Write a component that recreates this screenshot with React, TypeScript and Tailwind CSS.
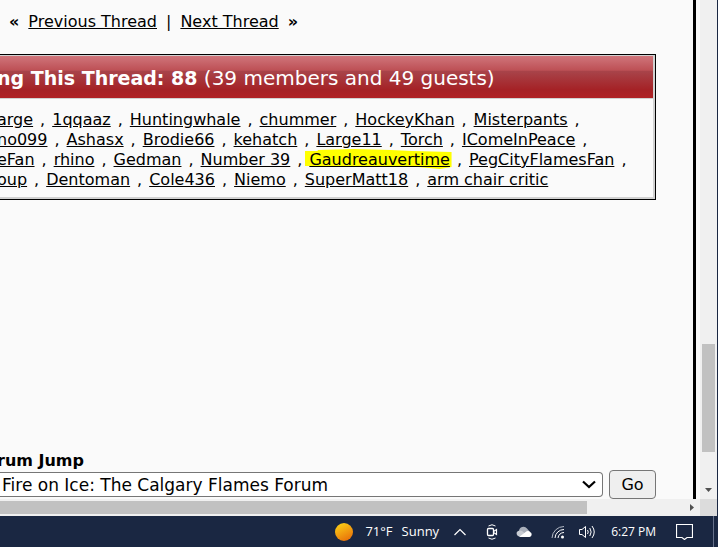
import { Fragment } from "react";

const MEMBER_LINES: string[][] = [
  ["arge", "1qqaaz", "Huntingwhale", "chummer", "HockeyKhan", "Misterpants", ""],
  ["no099", "Ashasx", "Brodie66", "kehatch", "Large11", "Torch", "IComeInPeace", ""],
  ["eFan", "rhino", "Gedman", "Number 39", "Gaudreauvertime", "PegCityFlamesFan", ""],
  ["oup", "Dentoman", "Cole436", "Niemo", "SuperMatt18", "arm chair critic"],
];

const HIGHLIGHTED = "Gaudreauvertime";

function MemberLink({ name }: { name: string }) {
  if (name !== HIGHLIGHTED) {
    return (
      <a href="#member" className="underline">
        {name}
      </a>
    );
  }
  return (
    <a href="#member" className="relative underline">
      {/* hand-drawn marker stroke */}
      <svg
        aria-hidden
        viewBox="0 0 150 20"
        preserveAspectRatio="none"
        className="absolute -top-px -left-1 -z-10 h-5 w-[calc(100%+6px)]"
      >
        <path d="M0 2H13V1L50 0 88 1 110 2 150 3V18L138 20 116 18 105 17 0 17Z" fill="#ffff00" />
      </svg>
      {name}
    </a>
  );
}

function ThreadNav() {
  return (
    <nav className="flex gap-[9px] pt-3 pl-3 leading-5 whitespace-nowrap">
      <strong>«</strong>
      <a href="#previous" className="underline">Previous Thread</a>
      <span>|</span>
      <a href="#next" className="underline">Next Thread</a>
      <strong>»</strong>
    </nav>
  );
}

function ViewersPanel() {
  return (
    <section className="mt-[22px] border border-l-0 border-black bg-[#fafafa]">
      <div className="border-2 border-t-1 border-l-0 border-[#d1d1d1]">
        <h2 className="flex h-[43px] items-center border-b border-[#d1d1d1] bg-[linear-gradient(#d0757b_0%,#bd5055_34%,#a8444a_36%,#a52226_80%,#b02225_100%)] pt-[2px] text-xl whitespace-pre text-white">
          <strong className="text-[19px]">ng This Thread: 88</strong> (39 members and 49 guests)
        </h2>
        <div className="isolate pt-[11px] pb-[7px] leading-5 whitespace-nowrap">
          {MEMBER_LINES.map((line) => (
            <div key={line[0]}>
              {line.map((name, i) => (
                <Fragment key={name}>
                  {i > 0 && <span className="mx-[7px]">,</span>}
                  {name && <MemberLink name={name} />}
                </Fragment>
              ))}
            </div>
          ))}
        </div>
      </div>
    </section>
  );
}

function ForumJump() {
  return (
    <form className="mt-auto" onSubmit={(e) => e.preventDefault()}>
      <label htmlFor="forum" className="block leading-[18px] font-bold">
        rum Jump
      </label>
      <div className="flex items-center gap-[6px]">
        <div className="relative flex-1">
          <select
            id="forum"
            className="block h-[25px] w-full appearance-none rounded-r border border-l-0 border-[#767676] bg-white pl-[5px] text-[17px] text-black"
          >
            <option>Fire on Ice: The Calgary Flames Forum</option>
          </select>
          <svg
            aria-hidden
            viewBox="0 0 14 9"
            className="pointer-events-none absolute top-2 right-[7px] h-[9px] w-[14px]"
          >
            <path d="M1 1.5 7 7 13 1.5" fill="none" stroke="#000" strokeWidth="2.2" />
          </svg>
        </div>
        <button className="h-[29px] w-[47px] rounded border border-[#767676] bg-[#efefef]">Go</button>
      </div>
    </form>
  );
}

function VerticalScrollbar() {
  return (
    <div className="flex w-[17px] flex-col items-center bg-[#f0f0f0]">
      <div className="flex-[344]" />
      <div className="w-[13px] flex-[108] bg-[#c1c1c1]" />
      <div className="flex-[36]" />
      <svg aria-hidden viewBox="0 0 7 4" className="mb-[7px] h-1 w-[7px]">
        <path d="M0 0H7L3.5 4Z" fill="#505050" />
      </svg>
    </div>
  );
}

function HorizontalScrollbar() {
  return (
    <div className="flex h-[17px]">
      <div className="flex flex-1 items-center bg-[#f0f0f0]">
        <div className="h-[13px] flex-[586] bg-[#c1c1c1]" />
        <div className="flex-[103]" />
        <svg aria-hidden viewBox="0 0 4 7" className="mr-[6px] h-[7px] w-1">
          <path d="M0 0V7L4 3.5Z" fill="#505050" />
        </svg>
      </div>
      <div className="w-[17px] bg-[#dcdcdc]" />
    </div>
  );
}

function Taskbar() {
  return (
    <footer className="flex h-[31px] items-center justify-end bg-[#1a2742] font-['Open_Sans',sans-serif] text-[13px] text-white">
      <svg aria-hidden viewBox="0 0 18 18" className="mr-3 size-[18px]">
        <defs>
          <linearGradient id="sun" x1="0.2" y1="0" x2="0.7" y2="1">
            <stop offset="0%" stopColor="#fcd116" />
            <stop offset="100%" stopColor="#e8700a" />
          </linearGradient>
        </defs>
        <circle cx="9" cy="9" r="9" fill="url(#sun)" />
      </svg>
      <span className="mr-[9px]">71°F</span>
      <span className="mr-[15px]">Sunny</span>
      <svg aria-hidden viewBox="0 0 12 8" className="mr-5 h-2 w-3" fill="none" stroke="#fff" strokeWidth="1.2">
        <path d="M.5 7 6 1.5 11.5 7" />
      </svg>
      <svg aria-hidden viewBox="0 0 12 16" className="mr-[18px] h-4 w-3" fill="none" stroke="#fff">
        <path d="M2.5 2Q6-.5 9.5 2M2.5 14Q6 16.5 9.5 14" />
        <rect x="1.5" y="4.5" width="6" height="7" rx="1" strokeWidth="1.3" />
        <path d="M7.5 7.5 10.5 5.5V10.5L7.5 8.5" strokeWidth="1.2" />
      </svg>
      <svg aria-hidden viewBox="0 0 16 11" className="mr-[19px] h-[11px] w-4">
        <path d="M3 5A4.5 4.5 0 0 1 11 2.5L14 6 4 9Z" fill="#a9afba" />
        <path d="M3 10.5A3 3 0 0 1 2 5 4 4 0 0 1 6 5L13 10.5Z" fill="#c9cdd4" />
        <path d="M3 11 9 6.5Q12 4 14 6A2.6 2.6 0 0 1 13.5 11Z" fill="#fff" />
      </svg>
      <svg aria-hidden viewBox="0 0 14 14" className="mr-[14px] size-[14px]" fill="none" stroke="#fff">
        <path d="M1 13A12 12 0 0 1 13 1.5" stroke="#b4bac6" />
        <path d="M4 13A9 9 0 0 1 13 4.5M7 13A6 6 0 0 1 13 7.5M10 13" />
        <circle cx="11.5" cy="12" r="1.5" fill="#fff" stroke="none" />
      </svg>
      <svg aria-hidden viewBox="0 0 17 14" className="mr-[15px] h-[14px] w-[17px]" fill="none" stroke="#fff">
        <path d="M.5 4.5H3L6.5 1.5V12.5L3 9.5H.5Z" />
        <path d="M8.5 5Q10 7 8.5 9M10.8 3Q13.5 7 10.8 11M13 1Q17.5 7 13 13" />
      </svg>
      <time className="mr-5 text-xs">6:27 PM</time>
      <svg aria-hidden viewBox="0 0 17 16" className="mr-5 h-4 w-[17px]" fill="none" stroke="#fff" strokeWidth="1.2">
        <path d="M.5.5H16.5V13.5H11L8.5 15.5 6 13.5H.5Z" />
      </svg>
      <div className="mr-1 h-full w-px bg-[#66708a]" />
    </footer>
  );
}

export default function App() {
  return (
    <div className="flex h-screen flex-col overflow-hidden bg-[#1a2742] font-['DejaVu_Sans',Verdana,sans-serif] text-base text-black">
      <div className="mr-px flex min-h-0 flex-1 flex-col">
        <div className="flex min-h-0 flex-1 bg-[#fafafa]">
          {/* the page is scrolled sideways, so its left edge is cut off */}
          <main className="mr-1 -ml-[3px] flex min-w-0 flex-1 flex-col border-r-3 border-black pr-[37px]">
            <ThreadNav />
            <ViewersPanel />
            <ForumJump />
          </main>
          <VerticalScrollbar />
        </div>
        <HorizontalScrollbar />
      </div>
      <Taskbar />
    </div>
  );
}
